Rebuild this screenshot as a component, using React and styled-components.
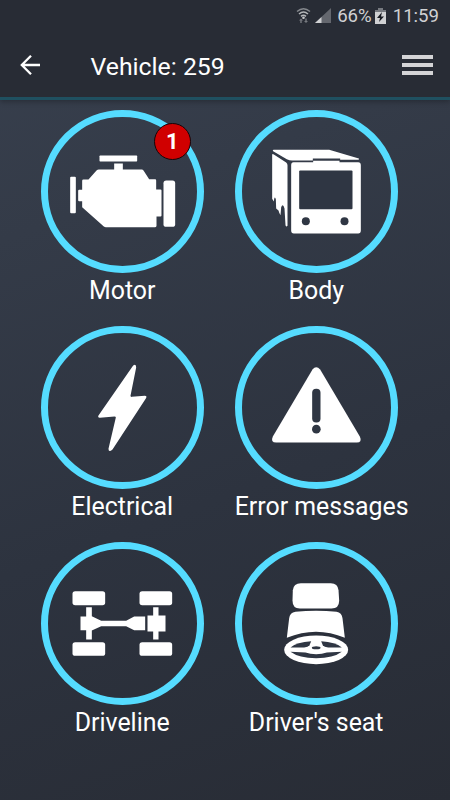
import React from 'react';
import styled, { createGlobalStyle } from 'styled-components';

const GlobalStyle = createGlobalStyle`
  body {
    margin: 0;
    font-family: Roboto, sans-serif;
    color: #fff;
    background: #282c35;
  }
`

const Screen = styled.div`
  display: flex;
  flex-direction: column;
  height: 800px;
  width: 450px;
  overflow: hidden;
  background: linear-gradient(160deg, #38404e 0%, #343b48 25%, #2d333f 60%, #282c35 100%);
`

const Top = styled.header`
  height: 97px;
  flex: none;
  background: #282c35;
  border-bottom: 3px solid #1f5060;
  box-sizing: content-box;
  box-shadow: 0 2px 5px rgba(0, 0, 0, 0.25);
`

const StatusBar = styled.div`
  display: flex;
  justify-content: flex-end;
  align-items: center;
  height: 32px;
  padding-right: 11px;
  font-size: 18.6px;
  color: #d0d1d3;
  svg {
    flex: none;
  }
`

const Percent = styled.span`
  margin: 0 3px 0 1px;
`

const Clock = styled.span`
  margin-left: 7px;
`

const TitleBar = styled.div`
  display: flex;
  align-items: center;
  height: 66px;
  padding: 0 17px 0 20px;
`

const Title = styled.h1`
  flex: 1;
  margin: 2px 0 0 50.5px;
  font-size: 24.8px;
  font-weight: 400;
`

const MenuButton = styled.div`
  display: flex;
  flex-direction: column;
  gap: 4px;
  span {
    width: 31px;
    height: 4px;
    background: #d4d4d6;
  }
`

const Grid = styled.main`
  display: grid;
  grid-template-columns: 163px 163px;
  grid-auto-rows: 216px;
  column-gap: 31px;
  padding: 9.5px 0 0 40.7px;
`

const TileBox = styled.div`
  position: relative;
`

const Ring = styled.div`
  box-sizing: border-box;
  width: 163px;
  height: 163px;
  border: 7px solid #55dcff;
  border-radius: 50%;
  svg {
    display: block;
    width: 149px;
    height: 149px;
  }
`

const Label = styled.div`
  margin-top: 3.5px;
  font-size: 24.9px;
  line-height: 30px;
  text-align: center;
  white-space: nowrap;
`

const Badge = styled.div`
  position: absolute;
  top: 13px;
  left: 113px;
  box-sizing: border-box;
  width: 37px;
  height: 37px;
  border: 1.5px solid #150508;
  border-radius: 50%;
  background: #d00000;
  font-size: 22px;
  font-weight: 700;
  line-height: 36px;
  text-align: center;
`

const dark = '#2f3643';

const MotorIcon = () => (
  <g>
    <rect x="190" y="153" width="113" height="18" rx="2" />
    <rect x="102" y="217" width="17" height="109" rx="3" />
    <rect x="382" y="228" width="35" height="139" rx="8" />
    <path d="M234 177H260V195H317Q320 195 322 198L339 224H357Q360 224 360 228V255H373Q376 255 376 258V333Q376 336 373 336H361V364Q361 368 357 368H209Q206 368 203 366L138 308V290H129Q126 290 126 287V259Q126 256 129 256H138V229Q138 225 142 225H157L181 198Q184 195 188 195H234Z" />
  </g>
)

const BodyIcon = () => (
  <g>
    <path d="M130 136H297L386 162Q389 165 384 166H330V162H248V168H186Q178 168 170 164L129 140Q126 137 130 136Z" />
    <path d="M126 150Q127 147 131 150L168 174Q172 177 172 182V364Q168 369 166 362L163 312Q158 294 153 308L151 332Q147 326 145 318L138 312L137 284Q133 272 131 291L126 283Z" />
    <path d="M190 173H249V169H328V173H384Q392 173 392 182V378Q392 387 384 387H191Q183 387 183 378V182Q183 173 190 173Z" />
    <rect x="207" y="198" width="160" height="116" rx="3" fill={dark} />
    <circle cx="227" cy="350" r="12" fill={dark} />
    <circle cx="343" cy="350" r="12" fill={dark} />
  </g>
)

const ElectricalIcon = () => (
  <path d="M291 135Q300 128 300 141L283 226Q283 230 287 229L326 226Q334 226 329 234L229 387Q217 397 217 385L239 291Q239 288 235 288L191 292Q182 291 189 282Z" />
)

const ErrorIcon = () => (
  <g>
    <path d="M247 147Q258 133 270 147L389 348Q397 366 380 366H138Q120 366 128 348Z" />
    <rect x="246" y="205" width="25" height="101" rx="12" fill={dark} />
    <circle cx="258.5" cy="326" r="13" fill={dark} />
  </g>
)

const DrivelineIcon = () => (
  <g>
    <rect x="109" y="164" width="98" height="42" rx="8" />
    <rect x="310" y="164" width="98" height="42" rx="8" />
    <rect x="109" y="317" width="98" height="41" rx="8" />
    <rect x="310" y="317" width="98" height="41" rx="8" />
    <path d="M150 212H167V239L195 253H270L294 240H327V281H294L270 269H195L167 282V309H150V281H133V240H150Z" />
    <path d="M351 212H367V237H388V285H367V309H351V285H334V237H351Z" />
  </g>
)

const SeatIcon = () => (
  <g>
    <path d="M212 140H302Q323 140 325 161L327 193Q327 216 304 216H209Q187 216 187 193L188 161Q190 140 212 140Z" />
    <path d="M196 226Q258 219 319 226Q335 229 337 245L344 304Q258 268 170 304L177 245Q179 229 196 226Z" />
    <ellipse cx="258" cy="340" rx="96" ry="43" />
    <g fill={dark}>
      <path d="M181 333Q200 316 243 314L238 326Q234 332 222 333Z" />
      <path d="M335 333Q316 316 273 314L278 326Q282 332 294 333Z" />
      <path d="M181 346L226 348Q240 353 258 353Q276 353 290 348L335 346Q310 365 258 365Q206 365 181 346Z" />
      <ellipse cx="258" cy="334" rx="13" ry="4.5" />
    </g>
  </g>
)

const tiles = [
  { label: 'Motor', Icon: MotorIcon, count: 1 },
  { label: 'Body', Icon: BodyIcon },
  { label: 'Electrical', Icon: ElectricalIcon },
  { label: 'Error messages', Icon: ErrorIcon },
  { label: 'Driveline', Icon: DrivelineIcon },
  { label: "Driver's seat", Icon: SeatIcon },
];

const Tile = ({ label, Icon, count }) => (
  <TileBox>
    <Ring>
      <svg viewBox="35.5 37.5 447 447" fill="#fff">
        <Icon />
      </svg>
    </Ring>
    {count && <Badge>{count}</Badge>}
    <Label>{label}</Label>
  </TileBox>
)

const App = () => (
  <>
    <GlobalStyle />
    <Screen>
      <Top>
        <StatusBar>
          <svg width="40" height="20" viewBox="0 0 40 20">
            <g fill="none" stroke="#b4b6b9" strokeWidth="1.5">
              <path d="M1 5.5Q7.5 0 14 5.5" stroke="#85888d" />
              <path d="M3 8Q7.5 4 12 8" />
              <path d="M5 10.400Q7.500 8.200 10 10.400" />
            </g>
            <circle cx="7.5" cy="11.8" r="1.3" fill="#c8c9cc" />
            <path d="M3 14.500L5 12.500L7 14.500H5.700V17H4.300V14.500ZM8 15L10 17L12 15H10.700V12.500H9.300V15Z" fill="#777a80" />
            <path d="M35 2V17H19Z" fill="#64676e" />
            <path d="M25.500 11V17H19Z" fill="#d0d1d3" />
          </svg>
          <Percent>66%</Percent>
          <svg width="11" height="16" viewBox="0 0 11 16">
            <path d="M3 0H8V2H11V5H0V2H3Z" fill="#777a80" />
            <path d="M0 4H11V16H0Z" fill="#d0d1d3" />
            <path d="M7 4L2 10H5L4 14L9 8.500H6Z" fill="#181b22" />
          </svg>
          <Clock>11:59</Clock>
        </StatusBar>
        <TitleBar>
          <svg width="20" height="20" viewBox="0 0 20 20" fill="none" stroke="#fff" strokeWidth="2.3">
            <path d="M11 0.8L1.8 10L11 19.2M1.8 10H20" />
          </svg>
          <Title>Vehicle: 259</Title>
          <MenuButton>
            <span />
            <span />
            <span />
          </MenuButton>
        </TitleBar>
      </Top>
      <Grid>
        {tiles.map((tile) => (
          <Tile key={tile.label} {...tile} />
        ))}
      </Grid>
    </Screen>
  </>
)

export default App;
